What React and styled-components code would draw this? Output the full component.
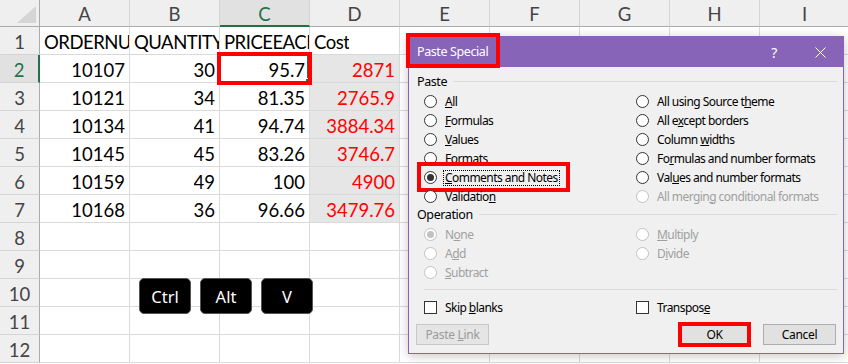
import React from "react";
import styled, { createGlobalStyle } from "styled-components";

const GlobalStyle = createGlobalStyle`
  html, body {
    margin: 0;
    padding: 0;
    background: #fff;
  }
  * {
    box-sizing: border-box;
  }
`;

const Page = styled.div`
  position: relative;
  width: 848px;
  height: 364px;
  overflow: hidden;
  background: #fff;
`;

/* ---------- spreadsheet ---------- */

const Sheet = styled.div`
  display: grid;
  grid-template-columns: 40px repeat(9, 90px);
  grid-template-rows: 27px repeat(12, 28px);
  font-family: Lato, "Liberation Sans", sans-serif;
  font-size: 18.5px;
`;

const Corner = styled.div`
  position: relative;
  background: #efefef;
  border-right: 1px solid #ababab;
  border-bottom: 1px solid #ababab;
  &::after {
    content: "";
    position: absolute;
    right: 3px;
    bottom: 3px;
    width: 19px;
    height: 17px;
    background: #d5d5d5;
    clip-path: polygon(100% 0, 100% 100%, 0 100%);
  }
`;

const ColHeader = styled.div`
  display: flex;
  align-items: center;
  justify-content: center;
  background: ${(p) => (p.$active ? "#e1e1e1" : "#efefef")};
  color: ${(p) => (p.$active ? "#217346" : "#444")};
  border-right: 1px solid #d4d4d4;
  border-bottom: ${(p) => (p.$active ? "2px solid #217346" : "1px solid #ababab")};
  padding-top: 2px;
`;

const RowHeader = styled.div`
  display: flex;
  align-items: center;
  justify-content: center;
  background: ${(p) => (p.$active ? "#e1e1e1" : "#efefef")};
  color: ${(p) => (p.$active ? "#217346" : "#444")};
  border-right: ${(p) => (p.$active ? "2px solid #217346" : "1px solid #ababab")};
  border-bottom: 1px solid #d4d4d4;
  padding-top: 2px;
`;

const Cell = styled.div`
  position: relative;
  display: flex;
  align-items: center;
  justify-content: ${(p) => (p.$right ? "flex-end" : "flex-start")};
  padding: ${(p) => (p.$right ? "2px 4px 0 4px" : "2px 0 0 4px")};
  border-right: 1px solid #dadada;
  border-bottom: 1px solid #dadada;
  background: ${(p) => (p.$shade ? "#e6e6e6" : "#fff")};
  color: ${(p) => (p.$red ? "#ff0000" : "#000")};
  letter-spacing: ${(p) => (p.$text ? "-0.5px" : "0")};
  white-space: nowrap;
  overflow: ${(p) => (p.$active ? "visible" : "hidden")};

  ${(p) =>
    p.$active &&
    `
    box-shadow: inset -2px 0 0 #217346;
    &::before {
      content: "";
      position: absolute;
      right: -3px;
      bottom: -3px;
      width: 5px;
      height: 5px;
      background: #217346;
      border: 1px solid #fff;
      z-index: 1;
    }
    &::after {
      content: "";
      position: absolute;
      inset: -3px;
      border: 4px solid #ff0000;
      z-index: 2;
    }
  `}
`;

const Clip = styled.span`
  overflow: hidden;
  display: block;
  max-width: 100%;
`;

const KeyRow = styled.div`
  position: absolute;
  left: 139px;
  top: 278px;
  display: flex;
  gap: 9px;
`;

const Key = styled.div`
  width: 52px;
  height: 36px;
  display: flex;
  align-items: center;
  justify-content: center;
  background: #000;
  border: 1px solid #555;
  border-radius: 5px;
  color: #fff;
  font-family: "Noto Sans", sans-serif;
  font-size: 16.5px;
`;

/* ---------- dialog ---------- */

const Dialog = styled.div`
  position: absolute;
  left: 408px;
  top: 36px;
  width: 436px;
  height: 318px;
  border: 1px solid #8764b8;
  background: #f0f0f0;
  box-shadow: 0 2px 10px rgba(0, 0, 0, 0.22);
  font-family: "Noto Sans", sans-serif;
  font-size: 12px;
  letter-spacing: -0.55px;
  color: #000;
  display: flex;
  flex-direction: column;
`;

const TitleBar = styled.div`
  height: 30px;
  background: #8764b8;
  display: flex;
  align-items: flex-start;
  color: #fff;
  flex: none;
`;

const TitleText = styled.div`
  position: relative;
  width: 88px;
  height: 29px;
  padding-left: 8px;
  line-height: 29px;
  font-size: 12.5px;
  letter-spacing: -0.4px;
  &::after {
    content: "";
    position: absolute;
    inset: -4px -3px -2px -3px;
    border: 4px solid #ff0000;
  }
`;

const TitleSpacer = styled.div`
  flex: 1;
`;

const TitleButton = styled.div`
  width: 46px;
  height: 30px;
  display: flex;
  align-items: center;
  justify-content: center;
  font-size: 14px;
`;

const Body = styled.div`
  flex: 1;
  padding: 6px 6px 8px 8px;
  display: flex;
  flex-direction: column;
`;

const GroupHeader = styled.div`
  height: 16px;
  display: flex;
  align-items: center;
  gap: 6px;
  font-size: 12.5px;
  letter-spacing: -0.4px;
  &::after {
    content: "";
    flex: 1;
    height: 1px;
    background: #dcdcdc;
  }
`;

const OptionGrid = styled.div`
  display: grid;
  grid-template-columns: 212px 1fr;
  grid-auto-rows: 19px;
  margin: 3px 0 0 7px;
`;

const Option = styled.div`
  position: relative;
  display: flex;
  align-items: center;
  gap: 8px;
  width: fit-content;
  color: ${(p) => (p.$disabled ? "#a0a0a0" : "#000")};
  ${(p) =>
    p.$marked &&
    `
    &::after {
      content: "";
      position: absolute;
      inset: -6px -11px -5px -7px;
      border: 4px solid #ff0000;
    }
  `}
`;

const Radio = styled.span`
  flex: none;
  width: 13px;
  height: 13px;
  border-radius: 50%;
  border: 1px solid ${(p) => (p.$disabled ? "#c2c2c2" : "#333")};
  background: #fff;
  display: flex;
  align-items: center;
  justify-content: center;
  &::after {
    content: "";
    display: ${(p) => (p.$checked ? "block" : "none")};
    width: 7px;
    height: 7px;
    border-radius: 50%;
    background: ${(p) => (p.$disabled ? "#c2c2c2" : "#333")};
  }
`;

const Check = styled.span`
  flex: none;
  width: 13px;
  height: 13px;
  border: 1px solid #333;
  background: #fff;
`;

const Label = styled.span`
  line-height: 14px;
  outline: ${(p) => (p.$focused ? "1px dotted #000" : "none")};
  outline-offset: 0;
  padding: 0 1px;
  margin-left: -1px;
`;

const Separator = styled.div`
  height: 1px;
  background: #dcdcdc;
  margin: 7px 0 0 7px;
`;

const CheckGrid = styled(OptionGrid)`
  margin-top: 8px;
`;

const ButtonRow = styled.div`
  display: flex;
  align-items: center;
  gap: 12px;
  margin: 7px 1px 0 -1px;
`;

const ButtonSpacer = styled.div`
  flex: 1;
`;

const Button = styled.div`
  position: relative;
  width: 73px;
  height: 21px;
  display: flex;
  align-items: center;
  justify-content: center;
  letter-spacing: -0.3px;
  background: ${(p) => (p.$disabled ? "#e5e5e5" : "#e1e1e1")};
  border: ${(p) =>
    p.$default ? "2px solid #0078d7" : p.$disabled ? "1px solid #c8c8c8" : "1px solid #adadad"};
  color: ${(p) => (p.$disabled ? "#9a9a9a" : "#000")};
  ${(p) =>
    p.$marked &&
    `
    &::after {
      content: "";
      position: absolute;
      inset: -4px -2px -4px -2px;
      border: 4px solid #ff0000;
    }
  `}
`;

const Accel = ({ text }) => {
  const i = text.indexOf("&");
  if (i < 0) return <span>{text}</span>;
  return (
    <span>
      {text.slice(0, i)}
      <u>{text[i + 1]}</u>
      {text.slice(i + 2)}
    </span>
  );
};

const CloseIcon = () => (
  <svg width="11" height="11" viewBox="0 0 11 11">
    <path d="M0.5 0.5 L10.5 10.5 M10.5 0.5 L0.5 10.5" stroke="#fff" strokeWidth="1" />
  </svg>
);

const columns = ["A", "B", "C", "D", "E", "F", "G", "H", "I"];

const rows = [
  ["ORDERNUMBER", "QUANTITYORDERED", "PRICEEACH", "Cost"],
  [10107, 30, 95.7, 2871],
  [10121, 34, 81.35, 2765.9],
  [10134, 41, 94.74, 3884.34],
  [10145, 45, 83.26, 3746.7],
  [10159, 49, 100, 4900],
  [10168, 36, 96.66, 3479.76],
];

const pasteOptions = [
  { text: "&All" },
  { text: "All using Source t&heme" },
  { text: "&Formulas" },
  { text: "All e&xcept borders" },
  { text: "&Values" },
  { text: "Column &widths" },
  { text: "Forma&ts" },
  { text: "Fo&rmulas and number formats" },
  { text: "&Comments and Notes", checked: true, focused: true, marked: true },
  { text: "Val&ues and number formats" },
  { text: "Validatio&n" },
  { text: "All mergin&g conditional formats", disabled: true },
];

const operationOptions = [
  { text: "N&one", checked: true, disabled: true },
  { text: "&Multiply", disabled: true },
  { text: "A&dd", disabled: true },
  { text: "D&ivide", disabled: true },
  { text: "&Subtract", disabled: true },
];

const RadioOption = ({ opt }) => (
  <Option $disabled={opt.disabled} $marked={opt.marked}>
    <Radio $checked={opt.checked} $disabled={opt.disabled} />
    <Label $focused={opt.focused}>
      <Accel text={opt.text} />
    </Label>
  </Option>
);

const PasteSpecial = () => (
  <Dialog>
    <TitleBar>
      <TitleText>Paste Special</TitleText>
      <TitleSpacer />
      <TitleButton>?</TitleButton>
      <TitleButton>
        <CloseIcon />
      </TitleButton>
    </TitleBar>
    <Body>
      <GroupHeader>Paste</GroupHeader>
      <OptionGrid>
        {pasteOptions.map((opt) => (
          <RadioOption key={opt.text} opt={opt} />
        ))}
      </OptionGrid>
      <GroupHeader>Operation</GroupHeader>
      <OptionGrid>
        {operationOptions.map((opt) => (
          <RadioOption key={opt.text} opt={opt} />
        ))}
      </OptionGrid>
      <Separator />
      <CheckGrid>
        <Option>
          <Check />
          <Label>
            <Accel text="Skip &blanks" />
          </Label>
        </Option>
        <Option>
          <Check />
          <Label>
            <Accel text="Transpos&e" />
          </Label>
        </Option>
      </CheckGrid>
      <ButtonRow>
        <Button $disabled>
          <Accel text="Paste &Link" />
        </Button>
        <ButtonSpacer />
        <Button $default $marked>
          OK
        </Button>
        <Button>Cancel</Button>
      </ButtonRow>
    </Body>
  </Dialog>
);

const App = () => {
  const rowCount = 12;
  return (
    <>
      <GlobalStyle />
      <Page>
        <Sheet>
          <Corner />
          {columns.map((c) => (
            <ColHeader key={c} $active={c === "C"}>
              {c}
            </ColHeader>
          ))}
          {Array.from({ length: rowCount }, (_, r) => {
            const data = rows[r] || [];
            return (
              <React.Fragment key={r}>
                <RowHeader $active={r === 1}>{r + 1}</RowHeader>
                {columns.map((c, ci) => {
                  const v = data[ci];
                  const isNum = typeof v === "number";
                  return (
                    <Cell
                      key={c}
                      $right={isNum}
                      $text={typeof v === "string"}
                      $shade={ci === 3 && r >= 1 && r <= 6}
                      $red={ci === 3 && isNum}
                      $active={ci === 2 && r === 1}
                    >
                      {v !== undefined && <Clip>{v}</Clip>}
                    </Cell>
                  );
                })}
              </React.Fragment>
            );
          })}
        </Sheet>
        <KeyRow>
          <Key>Ctrl</Key>
          <Key>Alt</Key>
          <Key>V</Key>
        </KeyRow>
        <PasteSpecial />
      </Page>
    </>
  );
};

export default App;
